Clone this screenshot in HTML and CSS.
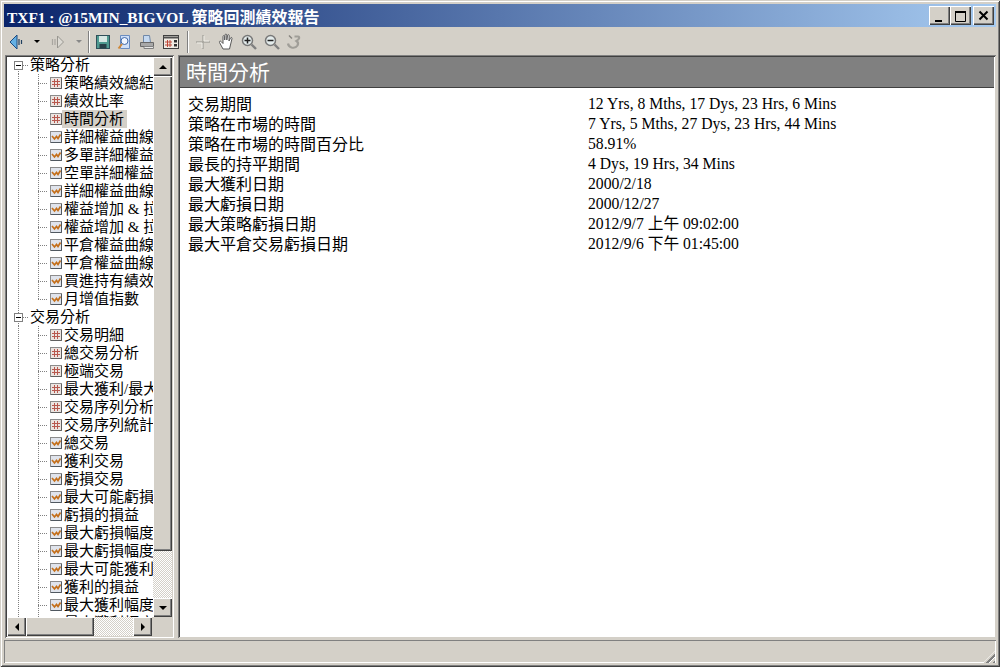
FILE: index.html
```html
<!DOCTYPE html>
<html lang="zh-Hant">
<head>
<meta charset="utf-8">
<title>TXF1 策略回測績效報告</title>
<link rel="stylesheet" href="styles.css">
</head>
<body>
<svg class="defs" width="0" height="0" aria-hidden="true">
  <symbol id="i-grid" viewBox="0 0 12 12">
    <rect x=".5" y=".5" width="11" height="11" fill="#ece4e0" stroke="#8c8c8c"/>
    <path d="M2 4.500h8M2 7.500h8M4.500 2v8M7.500 2v8" stroke="#b8584e" fill="none"/>
    <path d="M11.500 1v10.500H1" stroke="#606060" fill="none"/>
  </symbol>
  <symbol id="i-chart" viewBox="0 0 12 12">
    <rect x=".5" y=".5" width="11" height="11" fill="#e0e4ec" stroke="#8c8c8c"/>
    <path d="M2 5l2.500 3L6.500 5.500 8 7.500 10.500 3.500" stroke="#c4701c" stroke-width="1.700" fill="none"/>
    <path d="M11.500 1v10.500H1" stroke="#505860" fill="none"/>
  </symbol>
</svg>
<div class="window">
  <header class="titlebar">
    <span class="title">TXF1 : @15MIN_BIGVOL <span class="title-cjk">策略回測績效報告</span></span>
    <div class="caption-buttons">
      <button class="cap"><svg width="12" height="12" viewBox="0 0 12 12"><path d="M2 10h7v2H2z"/></svg></button>
      <button class="cap"><svg width="12" height="12" viewBox="0 0 12 12"><path d="M.5 1.500h10v10H.5z" fill="none" stroke="#000"/><path d="M0 1h11v2H0z"/></svg></button>
      <button class="cap cap-close"><svg width="12" height="12" viewBox="0 0 12 12"><path d="M1.500 1.500l8 8M9.500 1.500l-8 8" stroke="#000" stroke-width="2"/></svg></button>
    </div>
  </header>

  <nav class="toolbar">
    <span class="tool t-back"><svg width="15" height="16" viewBox="0 0 15 16"><path d="M8 1L1 8l7 7z" fill="#64b0e4" stroke="#1c4a80"/><path d="M10 5v6M12.500 6v4" stroke="#204060" stroke-width="1.200"/></svg></span>
    <span class="tool t-drop"><span class="caret"></span></span>
    <span class="tool t-fwd"><svg width="14" height="16" viewBox="0 0 14 16"><path d="M6.500 2l6 6-6 6z" fill="#dcdad4" stroke="#989690"/><path d="M1.500 5v6M4 5v6" stroke="#a8a6a0" stroke-width="1.200"/></svg></span>
    <span class="tool t-drop2"><span class="caret caret-off"></span></span>
    <span class="sep"></span>
    <span class="tool t-save"><svg width="16" height="16" viewBox="0 0 16 16"><rect x="1.500" y="1.500" width="13" height="13" fill="#4f9a90" stroke="#30505a"/><rect x="4" y="2" width="8" height="6" fill="#d8e8e4"/><rect x="4.500" y="10" width="7" height="4.500" fill="#284048"/></svg></span>
    <span class="tool t-prev"><svg width="16" height="16" viewBox="0 0 16 16"><path d="M3.500 1.500h9v13h-9z" fill="#cfe0f8" stroke="#6a8cc0"/><circle cx="7.500" cy="7" r="3.500" fill="#f0f6ff" stroke="#4068a8"/><path d="M5 10l-3.500 4.500" stroke="#d08838" stroke-width="2"/></svg></span>
    <span class="tool t-print"><svg width="16" height="16" viewBox="0 0 16 16"><path d="M4.500 1.500h6l1 7h-7z" fill="#c4d8f0" stroke="#7088a8"/><path d="M1.500 8.500h13v4h-13z" fill="#a8a8a8" stroke="#686868"/><path d="M5 12.500h9.500v2H5z" fill="#e8e8e8" stroke="#808080"/></svg></span>
    <span class="tool t-table"><svg width="16" height="14" viewBox="0 0 16 14"><rect x=".5" y=".5" width="15" height="13" fill="#f0ece4" stroke="#404040"/><path d="M.5 2.500h15" stroke="#505050" stroke-width="2"/><path d="M2 7h7M2 10h7M4.500 5v7M7 5v7" stroke="#c04838" fill="none"/><rect x="11" y="5" width="3" height="2.500" fill="#303030"/><rect x="11" y="9" width="3" height="2.500" fill="#303030"/></svg></span>
    <span class="sep sep2"></span>
    <span class="tool t-cross"><svg width="16" height="16" viewBox="0 0 16 16"><path d="M8 1v14M1 8h14" stroke="#a8a6a0" stroke-width="1.500"/><path d="M9 2v5h5M2 9h5v5" stroke="#f0eee8" fill="none"/></svg></span>
    <span class="tool t-hand"><svg width="17" height="17" viewBox="0 0 17 17"><path d="M5 16L1.500 9.500c-.5-1.500 1-2 2-.5L5 10.500V3.500c0-1.200 1.500-1.200 1.700 0V7l.3-5c.1-1.200 1.700-1.200 1.800 0V7l.7-4.500c.2-1.200 1.800-1 1.700.2L11 8l1.500-3c.5-1 1.800-.6 1.500.6L12.700 11 11.500 16z" fill="#fff" stroke="#585858"/></svg></span>
    <span class="tool t-zin"><svg width="16" height="16" viewBox="0 0 16 16"><circle cx="6.500" cy="6.500" r="5" fill="#e4ecec" stroke="#787878" stroke-width="1.500"/><path d="M3.500 6.500h6M6.500 3.500v6" stroke="#202020" stroke-width="1.500"/><path d="M10.500 10.500l4.500 4.500" stroke="#808080" stroke-width="2.400"/></svg></span>
    <span class="tool t-zout"><svg width="16" height="16" viewBox="0 0 16 16"><circle cx="6.500" cy="6.500" r="5" fill="#e4ecec" stroke="#787878" stroke-width="1.500"/><path d="M3.500 6.500h6" stroke="#202020" stroke-width="1.500"/><path d="M10.500 10.500l4.500 4.500" stroke="#808080" stroke-width="2.400"/></svg></span>
    <span class="tool t-undo"><svg width="16" height="16" viewBox="0 0 16 16"><path d="M8.500 2.500h3.500q1.500 0 1 2-1 1.500-2.500 2.500 2.500 1.500 1 4.500-2 3-6 2-3-1-3.500-4" fill="none" stroke="#a09e98" stroke-width="2.200"/><path d="M3 1.500l3 3" stroke="#888680" stroke-width="1.500"/></svg></span>
  </nav>

  <main class="panes">
    <aside class="tree-pane">
      <div class="tree-view">
        <ul class="tree">
          <li class="root first"><span class="exp"></span><span class="label">策略分析</span></li>
          <li class="leaf"><svg class="ico"><use href="#i-grid"/></svg><span class="label">策略績效總結</span></li>
          <li class="leaf"><svg class="ico"><use href="#i-grid"/></svg><span class="label">績效比率</span></li>
          <li class="leaf"><svg class="ico"><use href="#i-grid"/></svg><span class="label selected">時間分析</span></li>
          <li class="leaf"><svg class="ico"><use href="#i-chart"/></svg><span class="label">詳細權益曲線</span></li>
          <li class="leaf"><svg class="ico"><use href="#i-chart"/></svg><span class="label">多單詳細權益</span></li>
          <li class="leaf"><svg class="ico"><use href="#i-chart"/></svg><span class="label">空單詳細權益</span></li>
          <li class="leaf"><svg class="ico"><use href="#i-chart"/></svg><span class="label">詳細權益曲線</span></li>
          <li class="leaf"><svg class="ico"><use href="#i-chart"/></svg><span class="label">權益增加 &amp; 拉</span></li>
          <li class="leaf"><svg class="ico"><use href="#i-chart"/></svg><span class="label">權益增加 &amp; 拉</span></li>
          <li class="leaf"><svg class="ico"><use href="#i-chart"/></svg><span class="label">平倉權益曲線</span></li>
          <li class="leaf"><svg class="ico"><use href="#i-chart"/></svg><span class="label">平倉權益曲線</span></li>
          <li class="leaf"><svg class="ico"><use href="#i-chart"/></svg><span class="label">買進持有績效</span></li>
          <li class="leaf last"><svg class="ico"><use href="#i-chart"/></svg><span class="label">月增值指數</span></li>
          <li class="root"><span class="exp"></span><span class="label">交易分析</span></li>
          <li class="leaf"><svg class="ico"><use href="#i-grid"/></svg><span class="label">交易明細</span></li>
          <li class="leaf"><svg class="ico"><use href="#i-grid"/></svg><span class="label">總交易分析</span></li>
          <li class="leaf"><svg class="ico"><use href="#i-grid"/></svg><span class="label">極端交易</span></li>
          <li class="leaf"><svg class="ico"><use href="#i-grid"/></svg><span class="label">最大獲利/最大</span></li>
          <li class="leaf"><svg class="ico"><use href="#i-grid"/></svg><span class="label">交易序列分析</span></li>
          <li class="leaf"><svg class="ico"><use href="#i-grid"/></svg><span class="label">交易序列統計</span></li>
          <li class="leaf"><svg class="ico"><use href="#i-chart"/></svg><span class="label">總交易</span></li>
          <li class="leaf"><svg class="ico"><use href="#i-chart"/></svg><span class="label">獲利交易</span></li>
          <li class="leaf"><svg class="ico"><use href="#i-chart"/></svg><span class="label">虧損交易</span></li>
          <li class="leaf"><svg class="ico"><use href="#i-chart"/></svg><span class="label">最大可能虧損</span></li>
          <li class="leaf"><svg class="ico"><use href="#i-chart"/></svg><span class="label">虧損的損益</span></li>
          <li class="leaf"><svg class="ico"><use href="#i-chart"/></svg><span class="label">最大虧損幅度</span></li>
          <li class="leaf"><svg class="ico"><use href="#i-chart"/></svg><span class="label">最大虧損幅度</span></li>
          <li class="leaf"><svg class="ico"><use href="#i-chart"/></svg><span class="label">最大可能獲利</span></li>
          <li class="leaf"><svg class="ico"><use href="#i-chart"/></svg><span class="label">獲利的損益</span></li>
          <li class="leaf"><svg class="ico"><use href="#i-chart"/></svg><span class="label">最大獲利幅度</span></li>
          <li class="leaf"><svg class="ico"><use href="#i-chart"/></svg><span class="label">最大獲利幅度</span></li>
        </ul>
      </div>
      <div class="vscroll">
        <span class="sb-btn"><span class="arrow arrow-up"></span></span>
        <span class="sb-thumb"></span>
        <span class="sb-track"></span>
        <span class="sb-btn"><span class="arrow arrow-down"></span></span>
      </div>
      <div class="hscroll">
        <span class="sb-btn"><span class="arrow arrow-left"></span></span>
        <span class="sb-thumb hthumb"></span>
        <span class="sb-track"></span>
        <span class="sb-btn"><span class="arrow arrow-right"></span></span>
      </div>
      <div class="corner"></div>
    </aside>

    <section class="report">
      <h1 class="report-head">時間分析</h1>
      <dl class="stats">
        <dt>交易期間</dt><dd>12 Yrs, 8 Mths, 17 Dys, 23 Hrs, 6 Mins</dd>
        <dt>策略在市場的時間</dt><dd>7 Yrs, 5 Mths, 27 Dys, 23 Hrs, 44 Mins</dd>
        <dt>策略在市場的時間百分比</dt><dd>58.91%</dd>
        <dt>最長的持平期間</dt><dd>4 Dys, 19 Hrs, 34 Mins</dd>
        <dt>最大獲利日期</dt><dd>2000/2/18</dd>
        <dt>最大虧損日期</dt><dd>2000/12/27</dd>
        <dt>最大策略虧損日期</dt><dd>2012/9/7 上午 09:02:00</dd>
        <dt>最大平倉交易虧損日期</dt><dd>2012/9/6 下午 01:45:00</dd>
      </dl>
    </section>
  </main>

  <footer class="statusbar">
    <span class="grip"></span>
  </footer>
</div>
</body>
</html>
```
FILE: styles.css
```css
* { box-sizing: border-box; }
html, body { margin: 0; padding: 0; }
body {
  width: 1000px;
  height: 667px;
  overflow: hidden;
  font-family: "Liberation Serif", "Noto Sans CJK TC", serif;
  font-size: 15px;
  color: #000;
  background: #d4d0c8;
}
.defs { display: block; height: 0; }

.window {
  width: 1000px;
  height: 667px;
  padding: 4px;
  display: flex;
  flex-direction: column;
  background: #d4d0c8;
  box-shadow: inset 1px 1px 0 #d4d0c8, inset -1px -1px 0 #404040,
              inset 2px 2px 0 #fff, inset -2px -2px 0 #808080;
}

.titlebar {
  height: 23px;
  flex: none;
  display: flex;
  align-items: center;
  justify-content: space-between;
  padding: 0 2px 0 3px;
  background: linear-gradient(90deg, #0a246a, #a6caf0);
  color: #fff;
}
.title { font-weight: 700; font-size: 15.4px; white-space: nowrap; }
.title-cjk { font-size: 16px; }
.caption-buttons { display: flex; }
.cap {
  width: 21px;
  height: 19px;
  padding: 0;
  border: 0;
  margin-left: 0.5px;
  display: flex;
  align-items: center;
  justify-content: center;
  background: #d4d0c8;
  box-shadow: inset 1px 1px 0 #fff, inset -1px -1px 0 #404040, inset -2px -2px 0 #808080;
}
.cap-close { margin-left: 2px; }

.toolbar {
  height: 28px;
  flex: none;
  display: flex;
  align-items: center;
  padding-top: 1px;
}
.tool { display: flex; align-items: center; justify-content: center; flex: none; }
.t-back { margin-left: 5px; }
.t-drop { margin-left: 10px; }
.t-fwd { margin-left: 11px; }
.t-drop2 { margin-left: 11px; }
.t-save { margin-left: 5px; }
.t-prev { margin-left: 6px; }
.t-print { margin-left: 6px; }
.t-table { margin-left: 8px; }
.t-cross { margin-left: 6px; }
.t-hand { margin-left: 7px; }
.t-zin { margin-left: 6px; }
.t-zout { margin-left: 7px; }
.t-undo { margin-left: 6px; }
.caret {
  width: 0;
  height: 0;
  border: 3px solid transparent;
  border-top: 3px solid #000;
  border-bottom: 0;
}
.caret-off { border-top-color: #888; }
.sep {
  width: 2px;
  height: 22px;
  margin-left: 6px;
  border-left: 1px solid #808080;
  border-right: 1px solid #fff;
  flex: none;
}
.sep2 { margin-left: 8px; }

.panes {
  flex: 1;
  min-height: 0;
  display: flex;
  gap: 4px;
  padding-left: 1px;
}

.tree-pane {
  width: 169px;
  flex: none;
  padding: 2px;
  display: grid;
  grid-template-columns: 146px 19px;
  grid-template-rows: 560px 19px;
  background: #d4d0c8;
  box-shadow: inset 1px 1px 0 #808080, inset -1px -1px 0 #fff,
              inset 2px 2px 0 #404040, inset -2px -2px 0 #d4d0c8;
}
.tree-view { background: #fff; overflow: hidden; }
.tree {
  list-style: none;
  margin: -1px 0 0;
  padding: 0;
  white-space: nowrap;
}
.tree li { height: 18px; display: flex; align-items: center; line-height: 18px; }
.label { padding: 0 2px; height: 18px; flex: none; }
.selected { background: #d4d0c8; padding-right: 3px; }
.root {
  padding-left: 7px;
  background:
    repeating-linear-gradient(#808080 0 1px, transparent 1px 2px) 11px 13px / 1px 5px no-repeat,
    repeating-linear-gradient(#808080 0 1px, transparent 1px 2px) 11px 0 / 1px 5px no-repeat,
    repeating-linear-gradient(90deg, #808080 0 1px, transparent 1px 2px) 16px 9px / 5px 1px no-repeat;
}
.root.first {
  background:
    repeating-linear-gradient(#808080 0 1px, transparent 1px 2px) 11px 13px / 1px 5px no-repeat,
    repeating-linear-gradient(90deg, #808080 0 1px, transparent 1px 2px) 16px 9px / 5px 1px no-repeat;
}
.root .label { margin-left: 5px; padding: 0 1px 0 2px; }
.exp {
  width: 9px;
  height: 9px;
  flex: none;
  border: 1px solid #808080;
  background: linear-gradient(#000, #000) center / 5px 1px no-repeat #fff;
}
.leaf {
  padding-left: 43px;
  background:
    repeating-linear-gradient(#808080 0 1px, transparent 1px 2px) 11px 0 / 1px 18px no-repeat,
    repeating-linear-gradient(#808080 0 1px, transparent 1px 2px) 31px 0 / 1px 18px no-repeat,
    repeating-linear-gradient(90deg, #808080 0 1px, transparent 1px 2px) 31px 9px / 10px 1px no-repeat;
}
.leaf.last {
  background:
    repeating-linear-gradient(#808080 0 1px, transparent 1px 2px) 11px 0 / 1px 18px no-repeat,
    repeating-linear-gradient(#808080 0 1px, transparent 1px 2px) 31px 0 / 1px 10px no-repeat,
    repeating-linear-gradient(90deg, #808080 0 1px, transparent 1px 2px) 31px 9px / 10px 1px no-repeat;
}
.ico { width: 12px; height: 12px; flex: none; }

.vscroll { display: flex; flex-direction: column; }
.hscroll { display: flex; width: 145px; }
.sb-btn {
  width: 19px;
  height: 19px;
  flex: none;
  display: flex;
  align-items: center;
  justify-content: center;
  background: #d4d0c8;
  box-shadow: inset 1px 1px 0 #fff, inset -1px -1px 0 #404040, inset -2px -2px 0 #808080;
}
.sb-thumb {
  flex: none;
  background: #d4d0c8;
  box-shadow: inset 1px 1px 0 #fff, inset -1px -1px 0 #404040, inset -2px -2px 0 #808080;
}
.vscroll .sb-thumb { height: 475px; }
.hthumb { width: 68px; }
.sb-track {
  flex: 1;
  background: conic-gradient(#d4d0c8 25%, #fff 0 50%, #d4d0c8 0 75%, #fff 0) 0 0 / 2px 2px;
}
.arrow { width: 0; height: 0; border: 4px solid transparent; }
.arrow-up { border-bottom-color: #000; border-top: 0; }
.arrow-down { border-top-color: #000; border-bottom: 0; }
.arrow-left { border-right-color: #000; border-left: 0; }
.arrow-right { border-left-color: #000; border-right: 0; }
.corner { background: #d4d0c8; }

.report {
  flex: 1;
  min-width: 0;
  padding: 2px;
  background: #fff;
  box-shadow: inset 1px 1px 0 #808080, inset -1px -1px 0 #d4d0c8,
              inset 2px 2px 0 #404040, inset -2px -2px 0 #fff;
}
.report-head {
  margin: 0;
  height: 31px;
  padding: 2px 0 0 6px;
  font-size: 21px;
  font-weight: 400;
  line-height: 28px;
  color: #fff;
  background: #808080;
  border-bottom: 1px solid #404040;
}
.stats {
  margin: 6px 0 0;
  padding-left: 8px;
  display: grid;
  grid-template-columns: 400px 1fr;
  grid-auto-rows: 20px;
  line-height: 20px;
}
.stats dt, .stats dd { margin: 0; white-space: nowrap; }
.stats dt { font-size: 16px; line-height: 22px; }
.stats dd { font-size: 15.7px; }

.statusbar {
  height: 23px;
  flex: none;
  margin-top: 2px;
  padding-right: 1px;
  display: flex;
  justify-content: flex-end;
  align-items: flex-end;
  box-shadow: inset 1px 1px 0 #808080, inset -1px -1px 0 #fff;
}
.grip {
  width: 12px;
  height: 12px;
  background: repeating-linear-gradient(135deg, #d4d0c8 0 2px, #808080 2px 3.500px, #fff 3.500px 4.300px);
  clip-path: polygon(100% 0, 100% 100%, 0 100%);
}
```
